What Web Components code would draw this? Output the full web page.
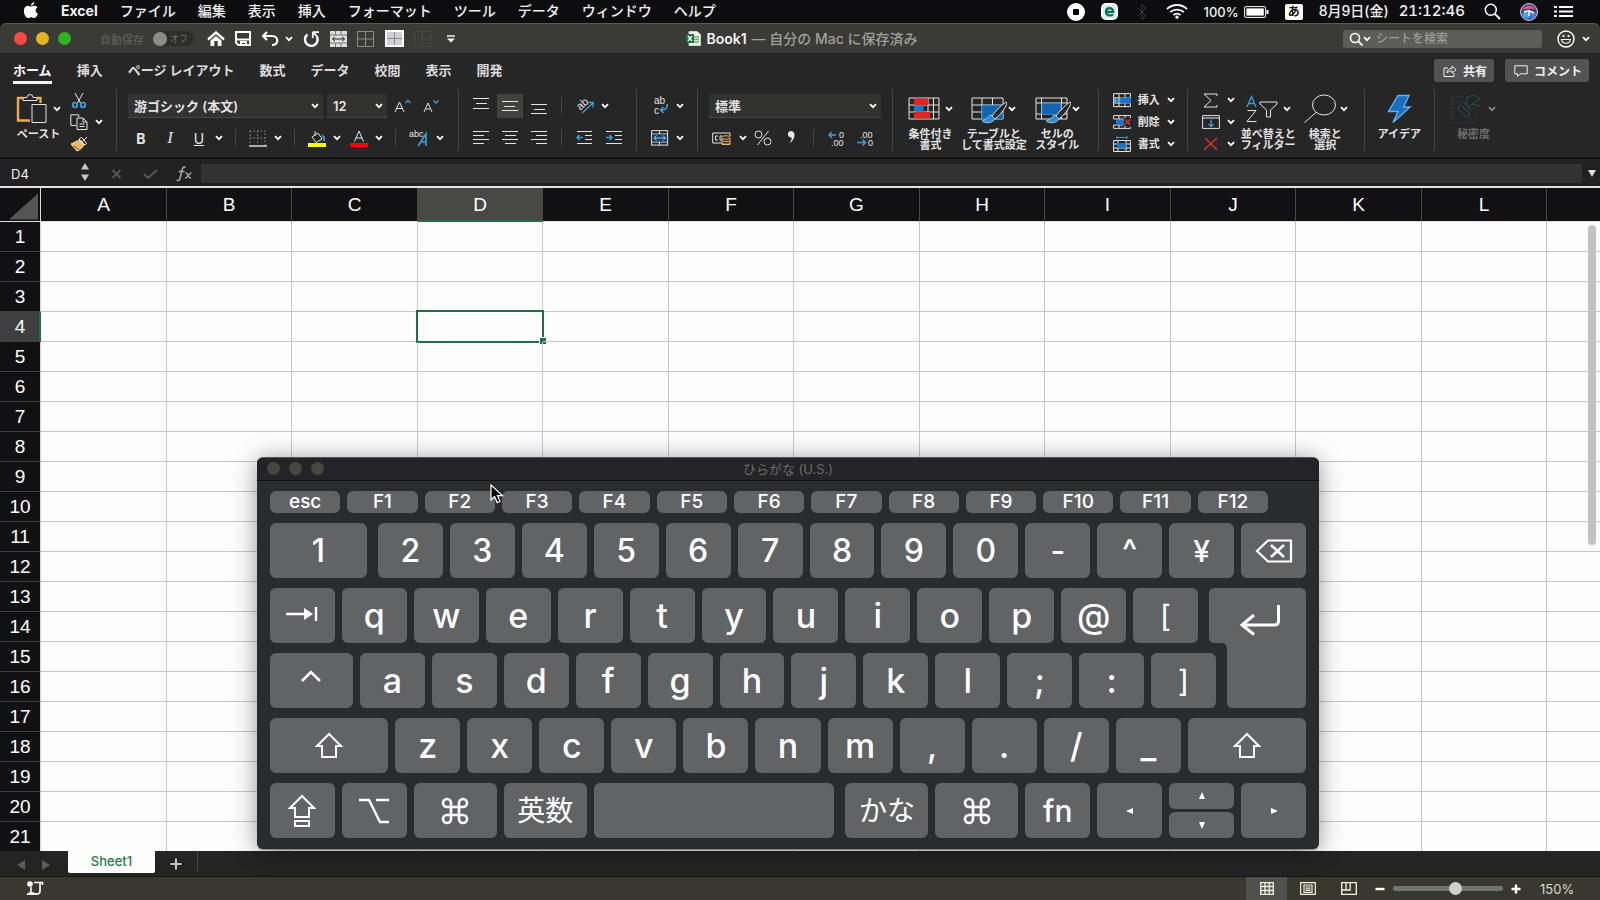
<!DOCTYPE html>
<html lang="ja">
<head>
<meta charset="utf-8">
<title>Book1</title>
<style>
html,body{margin:0;height:100%;background:#0d0d10;overflow:hidden}
body{font-family:Inter,"Noto Sans CJK JP",sans-serif;color:#f2f2f2}
</style>
</head>
<body>
<excel-desktop></excel-desktop>
<script>
const BASE = `*{box-sizing:border-box}button,input,select{font:inherit;color:inherit;background:none;border:0;margin:0;padding:0;border-radius:0;outline:0}a{color:inherit;text-decoration:none}`;
function define(tag, css, html) {
  customElements.define(tag, class extends HTMLElement {
    constructor() {
      super();
      this.attachShadow({mode: 'open'});
    }
    connectedCallback() {
      const t = document.createElement('template');
      t.innerHTML = `<style>${BASE}${css}</style>` + (typeof html === 'function' ? html(this) : html);
      this.shadowRoot.replaceChildren(t.content.cloneNode(true));
    }
  });
}

/* ---------- icons ---------- */
const B = '#3d9ddb', F = '#1263b0', T = 'stroke="none" fill="currentColor" font-family="Liberation Sans"';
const lines = (a) => a.map(([x, y, w]) => `<path d="M${x} ${y}h${w}"/>`).join('');
const brush = `<path d="M35 8c-7 5-11 10-14 14l3 3c5-4 9-9 12-15z" fill="#262626" stroke="#f0e8d8"/><path d="M20 21c-4 1-4 5-9 6 4 3 11 2 13-2z" fill="#2b8ad0" stroke="#8fc6f0"/>`;
const ICONS = {
  chev: [8, 6, `<path d="M1 1.2l3 3 3-3" stroke-width="1.8" stroke="#fff"/>`],
  apple: [16, 17, `<path fill="#fff" stroke="none" d="M11.2 0c.2 1.8-1.5 3.8-3.2 3.7C7.8 2 9.5.2 11.2 0zM8 4.6c.8 0 1.8-.9 3.4-.8 1.5.1 2.5.8 3.1 1.7-2.7 1.7-2.2 5.2.5 6.3-.6 1.700-2 4.200-3.600 4.200-1.300 0-1.700-.8-3.200-.8s-2 .8-3.200.8C2.9 16 .9 12.3.9 9c0-3.400 2.200-5.200 4.200-5.200 1.300 0 2.200.8 2.900.8z"/>`],
  rec: [18, 18, `<circle cx="9" cy="9" r="9" fill="#fff" stroke="none"/><rect x="6" y="6" width="6" height="6" rx="1" fill="#000" stroke="none"/>`],
  ebox: [17, 17, `<rect width="17" height="17" rx="5" fill="#fff" stroke="none"/><rect x="2" y="2" width="13" height="13" rx="3" fill="#c9f3ec" stroke="none"/><path d="M5 8.8h7.2c0-5-7.200-5-7.200 0 0 4 5 4.600 7 2.400" stroke="#12695f" stroke-width="2.2"/>`],
  bt: [10, 16, `<path d="M1 4l8 8-4 3.500v-15L9 4l-8 8" stroke="#3a3a3e"/>`],
  wifi: [22, 15, `<g stroke="#fff" stroke-width="1.8"><path d="M1 5a14.500 14.500 0 0 1 20 0M4.200 8.200a10 10 0 0 1 13.600 0M7.500 11.200a5 5 0 0 1 7 0"/></g><circle cx="11" cy="13.200" r="1.6" fill="#fff" stroke="none"/>`],
  batt: [25, 12, `<rect x=".6" y=".6" width="21" height="10.800" rx="1.5" stroke="#fff"/><rect x="2.400" y="2.400" width="17.400" height="7.200" fill="#fff" stroke="none"/><path d="M23.500 4v4" stroke="#fff" stroke-width="2"/>`],
  search: [17, 17, `<circle cx="6.800" cy="6.800" r="5.500" stroke="#fff" stroke-width="1.5"/><path d="M11 11l5 5" stroke="#fff" stroke-width="1.8"/>`],
  find2: [14, 14, `<circle cx="6" cy="6" r="4.500" stroke="#fff" stroke-width="1.6"/><path d="M9.500 9.500l4 4" stroke="#fff" stroke-width="1.8"/>`],
  siri: [18, 18, `<circle cx="9" cy="9" r="8.400" fill="#3a3a78" stroke="#e8e0f0"/><path d="M2 7c2-5 11-6 14 0-4-2-9-1-14 0z" fill="#e0508c" stroke="none"/><path d="M2 11c3-4 7-3 8 4-4 2-7-1-8-4z" fill="#3fa8e8" stroke="none"/><path d="M9 8l7 2c0 4-3 6-5 6z" fill="#4a78e0" stroke="none"/><path d="M4 9c4-2 7-1 10 1M9 7v6" stroke="#fff" stroke-width="1.6"/>`],
  list: [20, 13, `<path d="M0 2h3M5 2h14M0 6.500h3M5 6.500h14M0 11h3M5 11h14" stroke="#fff" stroke-width="2"/>`],
  home: [18, 16, `<path d="M1 8.500L9 1.500l8 7" stroke="#fff" stroke-width="2.4"/><path d="M3.500 9.500L9 5l5.500 4.500V15h-3.800v-5H7.300v5H3.500z" fill="#fff" stroke="none"/>`],
  save: [16, 15, `<path d="M1 1h14v13H3.500L1 11.800z" stroke="#fff" stroke-width="2"/><path d="M2 8.500h12M6 13.500v-2.500h5v2.500" stroke="#fff" stroke-width="2"/>`],
  undo: [18, 15, `<path d="M6 1L2 5l4 4M2.500 5H11c7 0 7 9 0 9" stroke="#fff" stroke-width="2.2"/>`],
  redo: [17, 16, `<path d="M9.500 1.200H16M9.800 1.200V7M10 1.500l3.500 3" stroke="#fff" stroke-width="1.8"/><path d="M13.500 5a6.300 6.300 0 1 1-9-1.500" stroke="#fff" stroke-width="2.4"/>`],
  mergeq: [17, 16, `<rect width="17" height="16" fill="#ddd" stroke="none"/><path d="M0 4h17M0 12h17M5.500 0v4M11 0v4M5.500 12v4M11 12v4" stroke="#777"/><path d="M2.500 8h12M5 5.800L2.500 8 5 10.200M12 5.800L14.500 8 12 10.200" stroke="#222"/>`],
  gridq: [18, 16, `<rect x=".5" y=".5" width="16" height="15" stroke="#8a8a86"/><path d="M8.500 1v14M1 8h16" stroke="#8a8a86"/>`],
  gridf: [19, 17, `<rect x="1" y="1" width="17" height="15" fill="#cfcfd4" stroke="#fff" stroke-width="2"/><path d="M9.500 2v13M2 8.500h15" stroke="#8a8a90"/>`],
  gridd: [18, 16, `<rect x=".5" y=".5" width="16" height="15" stroke="#5c5c58" stroke-dasharray="1 2"/><path d="M8.500 1v14M1 8h16" stroke="#5c5c58" stroke-dasharray="1 2"/>`],
  more: [8, 8, `<path d="M0 1h8" stroke="#fff" stroke-width="1.4"/><path d="M0 3.500h8L4 7.500z" fill="#fff" stroke="none"/>`],
  doc: [15, 15, `<path d="M3 .5h8l3.500 3V14.500H3z" fill="#eef5ea" stroke="#cfd8c8"/><path d="M8 6h5M8 8.500h5M8 11h5" stroke="#6ab04c" stroke-width="1.6"/><rect y="3" width="8" height="9" fill="#1d7044" stroke="none"/><path d="M2 5l4 5M6 5l-4 5" stroke="#fff" stroke-width="1.4"/>`],
  smile: [18, 18, `<circle cx="9" cy="9" r="8" stroke="#fff" stroke-width="1.4"/><path d="M4.500 9.500c1 5 8 5 9 0z" stroke="#fff" stroke-width="1.2"/><path d="M6.500 5v2M11.500 5v2" stroke="#fff" stroke-width="1.8"/>`],
  share: [14, 12, `<path d="M5 3H1v8.500h10V8"/><path d="M4 8c0-3 2-4.500 5-4.500V1L13 4.800 9 8V6C7 6 5.500 6.500 4 8z"/>`],
  comment: [14, 12, `<path d="M.8.8h12.400v8H6L3.500 11.400V8.800H.8z"/>`],
  paste: [32, 30, `<path d="M7 4H2v22.500h12M21 4h3.500v5" stroke="#f0a848" stroke-width="2.4"/><path d="M7 6.500V3.500h4a3 3 0 0 1 6 0h4v3z"/><path d="M16 10.500h14v18H16z" fill="#262626"/>`],
  cut: [18, 17, `<path d="M5 1l5.500 10M13 1L7.500 11"/><g stroke="${B}" stroke-width="1.8"><circle cx="5" cy="13" r="2.300"/><circle cx="13" cy="13" r="2.300"/></g>`],
  copy: [18, 16, `<path d="M6 11.500H.8V.8h8V3"/><path d="M7 4h6l4 4v7.500H7zM13 4v4h4M9.500 10h5M9.500 12.500h5"/>`],
  brush: [18, 16, `<path d="M17 1l-5 5M9 3l6 6 1.500-2-5-5.500z" stroke="#eee"/><path d="M9 4L1 8l6 7c3-1 5-3 7-6z" fill="#f2b561" stroke="#f6dca8"/><path d="M4 10l5 4" stroke="#7a4a10"/>`],
  border: [18, 17, `<path d="M1 1h15v14M1 1v14M8.500 1v14M1 8h15" stroke="#8a8a8a" stroke-dasharray="1.5 2"/><path d="M0 16h18" stroke-width="1.4"/>`],
  fill: [18, 17, `<path d="M7 1v5M4 7l6-4 4 6-6 3.500z"/><path d="M14 6c2 0 2.500 2 2 5" stroke="${B}" stroke-width="2"/><rect y="13" width="18" height="4" fill="#ff0" stroke="none"/>`],
  fontc: [18, 17, `<path d="M4.500 11.500L9 1l4.500 10.500M6 8h6"/><rect y="13" width="18" height="4" fill="#f00" stroke="none"/>`],
  abcA: [20, 20, `<text x="0" y="9" font-size="9" ${T}>abc</text><path d="M9 18l8-12v12M12 14h5" stroke="${B}" stroke-width="1.6"/>`],
  Aup: [18, 14, `<path d="M1 13L5.500 3 10 13M2.500 9.500h6"/><path d="M11.500 4l2.500-2.500L16.500 4" stroke="${B}" stroke-width="1.3"/>`],
  Adn: [18, 14, `<path d="M1 13L5 4l4 9M2.500 10h5"/><path d="M10.500 1.500L13 4l2.500-2.500" stroke="${B}" stroke-width="1.3"/>`],
  vtop: [18, 24, lines([[1, 4.5, 16], [4, 9.5, 11], [1, 14.5, 16]])],
  vmid: [18, 24, lines([[1, 7.5, 16], [3, 12.5, 11], [1, 16.5, 16]])],
  vbot: [18, 24, lines([[1, 10.5, 16], [4, 15.5, 11], [1, 19.5, 16]])],
  al: [18, 16, lines([[1, 1.5, 16], [1, 5.5, 11], [1, 9.5, 16], [1, 13.5, 11]])],
  ac: [18, 16, lines([[1, 1.5, 16], [4, 5.5, 11], [1, 9.5, 16], [4, 13.5, 11]])],
  ar: [18, 16, lines([[1, 1.5, 16], [6, 5.5, 11], [1, 9.5, 16], [6, 13.5, 11]])],
  orient: [18, 22, `<g transform="rotate(-42 8 11)"><text x="2" y="12" font-size="11" ${T}>ab</text></g><path d="M6 18L17 8M12.500 7.500L17.500 7.500 17 12.500" stroke="${B}" stroke-width="1.3"/>`],
  outd: [18, 16, lines([[1, 1.5, 15], [9, 5.5, 7], [9, 9.5, 7], [1, 13.5, 15]]) + `<path d="M7 7.500H1M3.500 5L1 7.500 3.500 10" stroke="${B}" stroke-width="1.5"/>`],
  ind: [18, 16, lines([[1, 1.5, 16], [10, 5.5, 7], [10, 9.5, 7], [1, 13.5, 16]]) + `<path d="M1 7.500h6M4.500 5L7 7.500 4.500 10" stroke="${B}" stroke-width="1.5"/>`],
  wrap: [18, 24, `<text x="3" y="10" font-size="10" ${T}>ab</text><text x="3" y="20" font-size="10" ${T}>c</text><path d="M16 10c1 5-3 6-6 6M12.500 13L9.500 16l3 3" stroke="${B}" stroke-width="1.6"/>`],
  merge: [18, 16, `<rect x=".6" y=".6" width="16" height="14.500"/><path d="M1 4h15M1 12h15M8.500 1v3M8.500 12v3"/><rect x="1.500" y="4.500" width="14.500" height="7" fill="#16406a" stroke="none"/><path d="M3 8h11.500M5.500 5.500L3 8l2.500 2.500M12 5.500L14.500 8 12 10.500" stroke="#8fd0ff"/>`],
  cur: [20, 15, `<path d="M10 12H.7V2H18v3M6 5H3.500v4H6M10.500 5H8v4h2"/><path d="M10 7v6.500h8V7" fill="#262626" stroke="#f0b25a"/><ellipse cx="14" cy="6.500" rx="4" ry="1.800" fill="#262626" stroke="#f0b25a"/><path d="M10 9.500c1 1.500 7 1.500 8 0M10 12c1 1.500 7 1.500 8 0" stroke="#f0b25a"/>`],
  pct: [18, 16, `<circle cx="4.500" cy="4.500" r="3.500"/><circle cx="13.500" cy="11.500" r="3.500"/><path d="M14.500 1l-11 14"/>`],
  comma: [18, 16, `<path d="M8.500 1c6-.500 5 9-1 12 2-3 2.500-4 2-5.500-4 .5-5-6-1-6.500z" fill="#e8e8e8" stroke="none"/>`],
  dec1: [18, 17, `<text x="11" y="8" font-size="9" ${T}>0</text><text x="3" y="16" font-size="9" ${T}>.00</text><path d="M8 5H1M4 2L1 5l3 3" stroke="${B}" stroke-width="1.5"/>`],
  dec2: [18, 17, `<text x="3" y="8" font-size="9" ${T}>.00</text><text x="11" y="16" font-size="9" ${T}>0</text><path d="M0 12.500h8M5.500 9.500l3 3-3 3" stroke="${B}" stroke-width="1.5"/>`],
  cond: [32, 30, `<path d="M1 4h30v21H1zM6.500 4v21M20 4v21M25.500 4v21M1 11h30M1 18h30"/><path d="M6 4.500h14V11H6zM6 18h16v6.500H6z" fill="#e0261c" stroke="none"/><path d="M6 11.500h9.500v6H6z" fill="#1a76cc" stroke="none"/>`],
  tablef: [36, 30, `<path d="M1 4h31v21H1zM11 4v21M21.500 4v21M1 11h31M1 18h31"/><path d="M11 11.500h20.500V25H11z" fill="${F}" stroke="#2f86d2"/>${brush}`],
  cellf: [36, 30, `<path d="M1 4h31v21H1zM6.500 4v21M26.500 4v21M1 9h31M1 20h31"/><path d="M7 9.500h19v11H7z" fill="${F}" stroke="#2f86d2"/>${brush}`],
  insc: [18, 15, `<path d="M.6.6h16.800v13H.6zM6 1v13M12 1v13M1 5h17M1 10h17"/><rect x="8" y="4.500" width="10" height="6" fill="#1a76cc" stroke="none"/><path d="M8 7.500H1M4 4.500l-3 3 3 3" stroke="#5ab4f0" stroke-width="1.4"/>`],
  delc: [18, 15, `<path d="M17.400 3V.6H.6V4M.6 10v3.400h16.800V12M6 .6V4M12 .6V3M6 10v3M12 11v2M.6 4h10M.6 10h10"/><rect x="3" y="5" width="8" height="5" fill="#1a76cc" stroke="none"/><path d="M12 4.500l5 5M17 4.500l-5 5" stroke="#e0362c" stroke-width="1.5"/>`],
  fmtc: [18, 17, `<path d="M.6 4.500h16.800v11H.6zM5 4v11M13 4v11M1 8h17M1 12h17"/><rect x="4" y="7" width="9" height="5" fill="#1a76cc" stroke="none"/><path d="M4 1.500h10M4 0v3M14 0v3" stroke="${B}"/>`],
  sum: [18, 15, `<path d="M15 3V1H2l7 6.500L2 14h13v-2"/>`],
  down: [18, 14, `<path d="M.6.6h16.800v12.800H.6zM.6 3h16.800"/><path d="M9 4.500v7M6.500 9L9 11.500 11.500 9" stroke="${B}" stroke-width="1.4"/>`],
  clear: [18, 14, `<path d="M3 1l12 12M15 1L2 13" stroke="#e0362c" stroke-width="1.4"/>`],
  sort: [32, 30, `<path d="M1 13L5.500 2.500 10 13M2.500 9.500h6" stroke="${B}" stroke-width="1.3"/><path d="M1.500 16.500H10L1 27.500h9.500"/><path d="M14 8h17v2l-6.500 6v7h-4v-7L14 10z"/>`],
  find: [34, 30, `<ellipse cx="21" cy="11" rx="11.500" ry="10"/><path d="M13 18.500L1.500 28.500"/>`],
  idea: [26, 30, `<path d="M12 1.500h11L17.500 13H24L7 28.500l5-11H2.500z" fill="#1a6cc0" stroke="#5ab4f0" stroke-width="1.4"/>`],
  sens: [32, 30, `<path d="M1 2.500h16M1 2.500v26h23V20" stroke="#24415a" stroke-dasharray="2 1.5"/><path d="M6 14l4-3 9 9-4 3zM12 8l8 8" stroke="#24507a"/><path d="M18 3c-4 3-3 8 1 9l10-7c-3-3-7-5-11-2zM22 10l7 2" stroke="#1d5a4a"/>`],
  fx: [18, 16, `<path d="M9.500 1.500C7 0 6 3 5.500 6L4 12.500c-.6 2-2 2.500-3.500 1.500M2.500 5.500h6" stroke="#aaa" stroke-width="1.5"/><path d="M9.500 7c3-1 2 6 5.500 5M15.500 7c-2-.500-4 5-6.500 5.200" stroke="#aaa" stroke-width="1.4"/>`],
  x: [12, 10, `<path d="M1.500 1l8 8M9.500 1l-8 8" stroke="#555" stroke-width="2.2"/>`],
  check: [15, 10, `<path d="M1 5l4 4L14 1" stroke="#555" stroke-width="2.2"/>`],
  spin: [10, 18, `<path d="M1 6.500h8L5 0zM1 11.500h8L5 18z" fill="#c8c8c8" stroke="none"/>`],
  tri: [8, 7, `<path d="M0 0h8L4 7z" fill="#ddd" stroke="none"/>`],
  left: [8, 10, `<path d="M8 0v10L0 5z" fill="#5c5c5c" stroke="none"/>`],
  right: [8, 10, `<path d="M0 0v10l8-5z" fill="#5c5c5c" stroke="none"/>`],
  plus: [12, 12, `<path d="M6 .5v11M.5 6h11" stroke="#c4c4c4" stroke-width="2.2"/>`],
  plusb: [10, 10, `<path d="M5 .5v9M.5 5h9" stroke="#fff" stroke-width="2.4"/>`],
  minusb: [10, 10, `<path d="M.5 5h9" stroke="#fff" stroke-width="2.4"/>`],
  script: [18, 15, `<circle cx="4" cy="3" r="2.800" fill="#fff" stroke="none"/><path d="M8 1.500h8.500V4M5 6v6M14 2v8c0 3-2 3-3 3H3" stroke="#fff" stroke-width="1.6"/><path d="M1 13.500c2-3 7-2 10 0z" fill="#fff" stroke="#fff"/>`],
  vgrid: [14, 13, `<path d="M.7.7h12.600v11.600H.7zM5 .7v12M9.300.7v12M.7 4.500h13M.7 8.500h13" stroke="#f4f4e0" stroke-width="1.3"/>`],
  vpage: [16, 13, `<path d="M.7.7h14.600v11.600H.7zM4 3h8v7.500H4zM5.500 5h5M5.500 6.800h5M5.500 8.600h5" stroke="#f4f4e0" stroke-width="1.2"/>`],
  vbreak: [16, 13, `<path d="M.7.7h14.600v11.600H.7zM.7 8h8.500V.7M5 .7v7" stroke="#f4f4e0" stroke-width="1.3"/>`],
  bksp: [38, 24, `<path d="M13 1.500h23v21H13L2 12z" stroke-width="2.2"/><path d="M16 6l13 12M29 6L16 18" stroke-width="2.6"/>`],
  tab: [32, 16, `<path d="M0 8h20M30 1v14" stroke-width="2.4"/><path d="M18 2l9 6-9 6z" fill="#fff" stroke="none"/>`],
  ret: [42, 32, `<path d="M39.500 1v16q0 4-4 4H3M15 11L3 21l12 9.500" stroke-width="3"/>`],
  caret: [20, 24, `<path d="M1 12l9-9 9 9" stroke-width="2.6"/>`],
  shift: [28, 28, `<path d="M14 2L2 14h5v11h14V14h5z" stroke-width="2"/>`],
  caps: [28, 34, `<path d="M14 2L2 14h5v9h14v-9h5zM7 27h14v5H7z" stroke-width="2"/>`],
  opt: [30, 26, `<path d="M0 2h10l11 22h9M17 2h13" stroke-width="2.4"/>`],
  cmd: [28, 28, `<path d="M10 10v8h8v-8zM10 10H6a4 4 0 1 1 4-4zM18 10V6a4 4 0 1 1 4 4zM18 18h4a4 4 0 1 1-4 4zM10 18v4a4 4 0 1 1-4-4z" stroke-width="2.6"/>`],
  kl: [8, 8, `<path d="M7 1v6L0 4z" fill="#fff" stroke="none"/>`],
  kr: [8, 8, `<path d="M1 1v6l7-3z" fill="#fff" stroke="none"/>`],
  ku: [8, 8, `<path d="M1 7h6L4 0z" fill="#fff" stroke="none"/>`],
  kd: [8, 8, `<path d="M1 1h6L4 8z" fill="#fff" stroke="none"/>`],
  cursor: [14, 20, `<path d="M1 1v15l3.600-3.400 2.600 6 2.800-1.300-2.600-5.700h5z" fill="#000" stroke="#fff" stroke-width="1.2"/>`]
};
define('x-icon', ':host{display:inline-flex;flex:none}svg{display:block}', el => {
  const [w, h, s] = ICONS[el.getAttribute('name')];
  return `<svg width="${w}" height="${h}" viewBox="0 0 ${w} ${h}" fill="none" stroke="currentColor" aria-hidden="true">${s}</svg>`;
});
const ic = n => `<x-icon name="${n}"></x-icon>`;

/* ---------- system menu bar ---------- */
define('menu-bar', `
:host{display:flex;align-items:center;justify-content:space-between;height:23px;flex:none;padding:0 26px 0 23px;background:#0d0d10;font-size:14px;line-height:20px;font-weight:500;white-space:nowrap}
nav,div{display:flex;align-items:center}nav{gap:22px}nav,.clk{padding-bottom:2px}nav b{font-weight:700}
.ime{justify-content:center;width:18px;height:16px;border-radius:2px;background:#fff;color:#111;font-size:12px;line-height:16px;font-weight:700}
.st{gap:16px}.pw{gap:5px;font-size:13px}.clk{gap:10px}.clk span+span{font-size:15px;font-variant-numeric:tabular-nums}.p{padding:0 3px}`,
`<nav>${ic('apple')}<a href="#"><b>Excel</b></a>${['ファイル', '編集', '表示', '挿入', 'フォーマット', 'ツール', 'データ', 'ウィンドウ', 'ヘルプ'].map(t => `<a href="#">${t}</a>`).join('')}</nav>
<div class="st">${ic('rec')}${ic('ebox')}<div class="p">${ic('bt')}</div>${ic('wifi')}<div class="pw"><span>100%</span>${ic('batt')}</div><div class="ime">あ</div><div class="clk"><span>8月9日(金)</span><span>21:12:46</span></div><div class="p">${ic('search')}</div>${ic('siri')}${ic('list')}</div>`);

/* ---------- window title bar ---------- */
const iconBtn = (label, inner, cls = '') => `<button class="${cls}" aria-label="${label}">${inner}</button>`;
define('title-bar', `
:host{display:grid;grid-template-columns:1fr auto 1fr;align-items:center;height:31px;flex:none;padding:0 10px 0 14px;background:#3a3a36;border-top:1px solid #5a5a55;border-bottom:1px solid #1c1c1c;border-radius:6px 6px 0 0;white-space:nowrap}
div{display:flex;align-items:center}.dots{gap:9px}i{width:13px;height:13px;border-radius:50%}
label{font-size:11px;color:#5e5e58;margin-left:29px;font-weight:500}
.tg{appearance:none;width:14px;height:14px;border-radius:50%;background:#8c8c88}
.pill{width:41px;height:15px;border-radius:8px;background:#2d2d2b;margin-left:9px;gap:3px;font-size:9px;color:#70706a}
.q{gap:10px;margin-left:13px}.q button{display:flex}.q .u{align-items:center;gap:6px}.q .m{margin-left:5px}
h1{margin:0;font-size:14px;line-height:20px;font-weight:500;color:#a0a09a;display:flex;align-items:center;gap:5px}h1 b{font-weight:600;color:#f4f4f4}
.r{justify-content:flex-end}.s{width:199px;height:18px;border-radius:3px;background:#5c5c59;padding-left:6px}
.s input{flex:1;min-width:0;font-size:12px;padding-left:5px}input::placeholder{color:#9c9c98;opacity:1;font-weight:500}.r button{display:flex;align-items:center;gap:7px;margin-left:15px}`,
`<div><div class="dots"><i style="background:#fb4a44"></i><i style="background:#e6b422"></i><i style="background:#2fb31f"></i></div>
<label for="as">自動保存</label><div class="pill"><input id="as" class="tg" type="checkbox"><span>オフ</span></div>
<div class="q">${iconBtn('ホーム', ic('home'))}${iconBtn('保存', ic('save'))}${iconBtn('元に戻す', ic('undo') + ic('chev'), 'u')}${iconBtn('やり直し', ic('redo'))}${iconBtn('結合', ic('mergeq'))}${iconBtn('罫線', ic('gridq'))}${iconBtn('格子', ic('gridf'))}${iconBtn('罫線なし', ic('gridd'))}${iconBtn('その他', ic('more'), 'm')}</div></div>
<h1>${ic('doc')}<b>Book1</b><span>— 自分の Mac に保存済み</span></h1>
<div class="r"><div class="s">${ic('find2')}${ic('chev')}<input type="search" aria-label="シートを検索" placeholder="シートを検索"></div>${iconBtn('フィードバック', ic('smile') + ic('chev'))}</div>`);

/* ---------- ribbon ---------- */
define('ribbon-tabs', `
:host{display:flex;align-items:flex-start;justify-content:space-between;height:34px;flex:none;padding:5px 11px 0 13px;background:#262626;font-size:13px;font-weight:700;white-space:nowrap;color:#dcdcdc}
nav{display:flex;gap:25px}a{line-height:22px;height:24px}a.on{color:#fff;box-shadow:0 3px #f4f4f4;height:22px}
div{display:flex;gap:11px}button{display:flex;align-items:center;height:23px;border-radius:3px;background:#535353;padding:0 7px 0 9px;gap:6px;font-size:12px;color:#f0f0f0;font-weight:700}`,
`<nav>${['ホーム', '挿入', 'ページ レイアウト', '数式', 'データ', '校閲', '表示', '開発'].map((t, i) => `<a href="#"${i ? '' : ' class="on"'}>${t}</a>`).join('')}</nav>
<div><button>${ic('share')}<span>共有</span></button><button>${ic('comment')}<span>コメント</span></button></div>`);

define('tool-button', `
:host{display:flex;height:24px;flex:none}button{display:flex;align-items:center;height:100%}
.i{min-width:18px;display:flex;justify-content:center;align-items:center;height:100%;font-size:14px}.c{width:22px;display:flex;justify-content:center}
:host([on]) .i{background:#42423e;box-shadow:-4px 0 #42423e,4px 0 #42423e}
.t{font-size:11px;font-weight:700;margin-left:7px;line-height:16px}`,
el => {
  const icon = el.getAttribute('icon'), text = el.getAttribute('text');
  return `<button><span class="i">${icon ? ic(icon) : '<slot></slot>'}</span>${text ? `<span class="t">${text}</span>` : ''}${el.hasAttribute('menu') ? `<span class="c">${ic('chev')}</span>` : ''}</button>`;
});
define('big-button', `
:host{display:block;flex:none}button{display:flex;flex-direction:column;align-items:center;font-size:11px;line-height:11px;font-weight:700;text-align:center;white-space:nowrap}
.i{display:flex;align-items:center;height:30px;margin-bottom:5px}.b{width:32px;display:flex}.c{margin-left:5px;display:flex}:host([off]){color:#6c6c6c}:host([off]) .c{opacity:.45}`,
el => `<button><span class="i">${el.hasAttribute('menu') ? `<span class="b">${ic(el.getAttribute('icon'))}</span><span class="c">${ic('chev')}</span>` : ic(el.getAttribute('icon'))}</span><span><slot></slot></span></button>`);
define('ribbon-group', `:host{display:flex;flex:none;height:62px;align-items:flex-start;border-right:1px solid #45453f;color:#e4e4e4}`, '<slot></slot>');
define('drop-down', `
:host{display:flex;align-items:center;position:relative;height:24px;background:#323231;border-bottom:1px solid #48483f}select{appearance:none;width:100%;height:100%;padding-left:6px;font-size:13px;font-weight:600}
x-icon{position:absolute;right:4px;pointer-events:none}`,
el => `<select aria-label="${el.getAttribute('label')}"><option>${el.getAttribute('value')}</option></select>${ic('chev')}`);

const tb = (n, attrs = '') => `<tool-button icon="${n}" ${attrs}></tool-button>`;
const big = (n, text, attrs = 'menu') => `<big-button icon="${n}" ${attrs}>${text}</big-button>`;
define('ribbon-bar', `
:host{display:flex;height:71px;flex:none;padding:1px 0 0 16px;background:#262626;border-bottom:2px solid #111}
.two{display:flex;flex-direction:column;gap:8px;padding-top:5px}.row{display:flex;height:24px;align-items:center}.g{gap:11px}
.three{display:flex;flex-direction:column}.three>*{height:22px}
big-button{padding-top:5px}.s{width:1px;height:18px;background:#45453f;margin:0 13px 0 5px}.s2{margin:0 14px 0 13px}.ser{font-family:"Liberation Serif";font-size:17px}
.font{width:195px;margin-right:4px}.size{width:60px;margin-right:7px}.num{width:172px}`,
`<ribbon-group style="padding-right:6px;gap:9px">${big('paste', 'ペースト')}<div class="three">${tb('cut')}${tb('copy', 'menu')}${tb('brush')}</div></ribbon-group>
<ribbon-group style="padding:0 7px 0 11px"><div class="two">
<div class="row"><drop-down class="font" label="フォント" value="游ゴシック (本文)"></drop-down><drop-down class="size" label="サイズ" value="12"></drop-down><div class="row g">${tb('Aup')}${tb('Adn')}</div></div>
<div class="row"><div class="row g" style="margin-left:4px"><tool-button><b>B</b></tool-button><tool-button><i class="ser">I</i></tool-button><tool-button menu><u>U</u></tool-button></div><span class="s"></span>${tb('border', 'menu')}<span class="s"></span><div class="row" style="gap:2px">${tb('fill', 'menu')}${tb('fontc', 'menu')}</div><span class="s"></span>${tb('abcA', 'menu')}</div></div></ribbon-group>
<ribbon-group style="padding:0 13px"><div class="two">
<div class="row"><div class="row g">${tb('vtop')}${tb('vmid', 'on')}${tb('vbot')}</div><span class="s s2"></span>${tb('orient', 'menu')}</div>
<div class="row"><div class="row g">${tb('al')}${tb('ac')}${tb('ar')}</div><span class="s s2"></span><div class="row g">${tb('outd')}${tb('ind')}</div></div></div></ribbon-group>
<ribbon-group style="padding:0 6px 0 14px"><div class="two"><div class="row">${tb('wrap', 'menu')}</div><div class="row">${tb('merge', 'menu')}</div></div></ribbon-group>
<ribbon-group style="padding:0 11px"><div class="two"><div class="row"><drop-down class="num" label="表示形式" value="標準"></drop-down></div>
<div class="row"><div class="row" style="margin:0 10px 0 3px">${tb('cur', 'menu')}${tb('pct')}</div>${tb('comma')}<span class="s s2"></span><div class="row g">${tb('dec1')}${tb('dec2')}</div></div></div></ribbon-group>
<ribbon-group style="padding:0 18px 0 15px;gap:8px">${big('cond', '条件付き<br>書式')}${big('tablef', 'テーブルと<br>して書式設定')}${big('cellf', 'セルの<br>スタイル')}</ribbon-group>
<ribbon-group style="padding:0 5px 0 14px"><div class="three">${tb('insc', 'text="挿入" menu')}${tb('delc', 'text="削除" menu')}${tb('fmtc', 'text="書式" menu')}</div></ribbon-group>
<ribbon-group style="padding:0 16px 0 14px"><div class="three" style="width:39px">${tb('sum', 'menu')}${tb('down', 'menu')}${tb('clear', 'menu')}</div>${big('sort', '並べ替えと<br>フィルター')}<span style="width:7px"></span>${big('find', '検索と<br>選択')}</ribbon-group>
<ribbon-group style="padding:0 13px">${big('idea', 'アイデア', '')}</ribbon-group>
<ribbon-group style="padding-left:16px;border:0">${big('sens', '秘密度', 'menu off')}</ribbon-group>`);

define('formula-bar', `
:host{display:flex;align-items:center;height:27px;flex:none;padding:2px 4px 0 0;background:#212122;font-size:13px}
.n{width:66px;padding-left:11px}.f{flex:1;height:19px;background:#323233;margin:0 6px 0 7px;min-width:0}button{display:flex}.sp{padding:0 21px 0 14px}.ok{padding:0 18px 0 20px}`,
`<input class="n" aria-label="名前ボックス" value="D4"><span class="sp">${ic('spin')}</span>${iconBtn('キャンセル', ic('x'))}${iconBtn('入力', ic('check'), 'ok')}${iconBtn('関数の挿入', ic('fx'))}<input class="f" aria-label="数式">${ic('tri')}`);

/* ---------- sheet ---------- */
define('sheet-grid', `
:host{display:block;flex:1;min-height:0;overflow:hidden;position:relative;background:#fdfdfd;border-top:2px solid #e4e4e4}
table{table-layout:fixed;width:100%;border-collapse:separate;border-spacing:0;font:19px/20px "Liberation Sans",sans-serif}
th{background:#111113;color:#fff;font-weight:400;padding:0}
thead th{height:34px;border-right:1px solid #4a4a44;border-bottom:1px solid #e0e0e0}thead th:last-child{border-right:0}
thead th:first-child,tbody th{border-right:1px solid #d8d8d8}
tbody th{height:30px;border-bottom:1px solid #3e3e42}
td{border-right:1px solid #c6c6cc;border-bottom:1px solid #c6c6cc;padding:0;position:relative}td:last-child{border-right:0}
thead th.on{background:#484847;border-bottom-color:#1f7045;box-shadow:inset 0 -1px #1f7045}tbody th.on{background:#3f3f3f;border-right-color:#1f7045;box-shadow:inset -1px 0 #1f7045}
.sel::before{content:"";position:absolute;inset:-2px -2px -2px -2px;border:2px solid #1f7045}
.sel::after{content:"";position:absolute;right:-4px;bottom:-3px;width:6px;height:6px;background:#1f7045;border:1px solid #fff;border-right:0;border-bottom:0}
.corner{display:block;margin:4px 2px 0 9px;width:29px;height:26px;background:#555;clip-path:polygon(100% 0,100% 100%,0 100%)}
.sb{position:absolute;right:4px;top:37px;width:8px;height:320px;border-radius:4px;background:#c2c2c4}`,
() => {
  const cols = [...'ABCDEFGHIJKL'];
  return `<table><colgroup><col style="width:41px">${cols.map((c, i) => `<col style="width:${i % 2 ? 125 : 126}px">`).join('')}<col></colgroup>
<thead><tr><th><span class="corner"></span></th>${cols.map(c => `<th scope="col"${c === 'D' ? ' class="on"' : ''}>${c}</th>`).join('')}<th></th></tr></thead>
<tbody>${Array.from({length: 21}, (_, r) => `<tr><th scope="row"${r === 3 ? ' class="on"' : ''}>${r + 1}</th>${[...cols, ''].map(c => `<td${r === 3 && c === 'D' ? ' class="sel"' : ''}></td>`).join('')}</tr>`).join('')}</tbody></table><div class="sb"></div>`;
});
define('sheet-tabs', `
:host{display:flex;align-items:flex-start;height:26px;flex:none;background:#242425;padding-left:17px;border-bottom:1px solid #141414}
button{display:flex}.nav{display:flex;gap:17px;padding:9px 18px 0 0}.tab{display:block;width:87px;height:22px;background:#fdfdfd;color:#1f7a4a;text-align:center;font-size:13px;line-height:21px;font-weight:500;border-radius:0 0 2px 2px}
.add{padding:7px 15px 0 15px}.s{width:1px;height:20px;background:#4a4a40}`,
`<div class="nav">${iconBtn('前のシート', ic('left'))}${iconBtn('次のシート', ic('right'))}</div><a class="tab" href="#">Sheet1</a>${iconBtn('シートの追加', ic('plus'), 'add')}<span class="s"></span>`);
define('status-bar', `
:host{display:flex;align-items:center;height:23px;flex:none;background:#38382f;padding:0 25px 0 26px;font-size:13px}
.sp{flex:1}.v{display:flex;align-items:center;justify-content:center;width:41px;height:23px}.v.on{background:#50504e}button{display:flex}
.z{display:flex;align-items:center;gap:8px;margin-left:6px}
input{appearance:none;width:110px;height:5px;border-radius:3px;background:#737371}
input::-webkit-slider-thumb{appearance:none;width:13px;height:13px;border-radius:50%;background:#cfcfcb}
output{margin-left:19px;width:35px;white-space:nowrap;color:#d8d8d4}`,
`${iconBtn('マクロの記録', ic('script'))}<span class="sp"></span>${iconBtn('標準', ic('vgrid'), 'v on')}${iconBtn('ページ レイアウト', ic('vpage'), 'v')}${iconBtn('改ページ プレビュー', ic('vbreak'), 'v')}<div class="z">${iconBtn('縮小', ic('minusb'))}<input type="range" aria-label="ズーム" min="0" max="100" value="58">${iconBtn('拡大', ic('plusb'))}</div><output>150%</output>`);

/* ---------- on-screen keyboard ---------- */
define('key-cap', `
:host{display:flex;flex:var(--w,65) 1 0;min-width:0}button{flex:1;min-width:0;display:flex;align-items:center;justify-content:center;border-radius:6px;background:#626365;color:#fff;white-space:nowrap}`, '<button><slot></slot></button>');
const k = (t, w) => `<key-cap${w ? ` style="--w:${w}"` : ''}>${t}</key-cap>`;
const ks = s => s.split(' ').map(t => k(t)).join('');
define('virtual-keyboard', `
:host{display:block;width:1062px;border-radius:6px;background:#2a2b2c;box-shadow:0 3px 24px rgba(0,0,0,.42),0 1px 0 #a8a8a4;border-top:1px solid #55555c}
header{position:relative;display:flex;align-items:center;justify-content:center;height:23px;background:#242428;border-bottom:1px solid #101012;border-radius:6px 6px 0 0;font-size:13px;line-height:20px;color:#6c6c66;padding-bottom:1px}
.d{position:absolute;left:10px;display:flex;gap:9px}.d i{width:13px;height:13px;border-radius:50%;background:#47473f}
main{display:flex;flex-direction:column;gap:10px;padding:10px 13px 11px}
.r{display:flex;gap:7px;height:55px;font-size:34px;line-height:40px;font-weight:500}
.fn{height:22px;font-size:19px;line-height:22px;padding-right:38px}.n{font-size:32px}
.mid{display:grid}.mid>*{grid-area:1/1}.rows{display:flex;flex-direction:column;gap:10px}.a{padding-right:108px}.b{padding-right:90px}
.ent{justify-self:end;width:97px;height:120px;background:#626365;clip-path:path("M6 0H91Q97 0 97 6V114Q97 120 91 120H24Q18 120 18 114V61Q18 55 12 55H6Q0 55 0 49V6Q0 0 6 0Z");display:flex;justify-content:center;padding:16px 0 0 4px;color:#fff}
.j{font-size:28px;font-weight:400}.ud{flex:65 1 0;display:flex;flex-direction:column;gap:3px;min-width:0}
.gap{width:4px;margin-left:-7px}.up{padding-bottom:12px}.sm{font-weight:400;font-size:30px}.md{font-size:30px}`,
`<header><div class="d"><i></i><i></i><i></i></div>ひらがな (U.S.)</header>
<main><div class="r fn">${ks('esc F1 F2 F3 F4 F5 F6 F7 F8 F9 F10 F11 F12')}</div>
<div class="r n">${k('1', 97)}<span class="gap"></span>${ks('2 3 4 5 6 7 8 9 0 -')}${k('^')}${k('<span class="md">¥</span>')}${k(ic('bksp'))}</div>
<div class="mid"><div class="rows"><div class="r a">${k(`<span class="up">${ic('tab')}</span>`)}${ks('q w e r t y u i o p @')}${k('<span class="sm">[</span>')}</div>
<div class="r b">${k(ic('caret'), 83)}${ks('a s d f g h j k l ; :')}${k('<span class="sm">]</span>')}</div></div><button class="ent" aria-label="return">${ic('ret')}</button></div>
<div class="r">${k(ic('shift'), 118)}${ks('z x c v b n m , . / _')}${k(ic('shift'), 118)}</div>
<div class="r">${k(ic('caps'))}${k(ic('opt'))}${k(ic('cmd'), 83)}${k('<span class="j">英数</span>', 83)}${k('', 241)}<span class="gap"></span>${k('<span class="j">かな</span>', 83)}${k(ic('cmd'), 83)}${k('<span class="md">fn</span>')}${k(ic('kl'))}<div class="ud">${k(ic('ku'), 1)}${k(ic('kd'), 1)}</div>${k(ic('kr'))}</div></main>`);

define('excel-desktop', `
:host{display:flex;flex-direction:column;height:100vh;position:relative}
virtual-keyboard{position:absolute;left:257px;top:457px}.cur{position:absolute;left:490px;top:484px}`,
`<menu-bar></menu-bar><title-bar></title-bar><ribbon-tabs></ribbon-tabs><ribbon-bar></ribbon-bar><formula-bar></formula-bar><sheet-grid></sheet-grid><sheet-tabs></sheet-tabs><status-bar></status-bar>
<virtual-keyboard></virtual-keyboard><x-icon class="cur" name="cursor"></x-icon>`);
</script>
</body>
</html>
